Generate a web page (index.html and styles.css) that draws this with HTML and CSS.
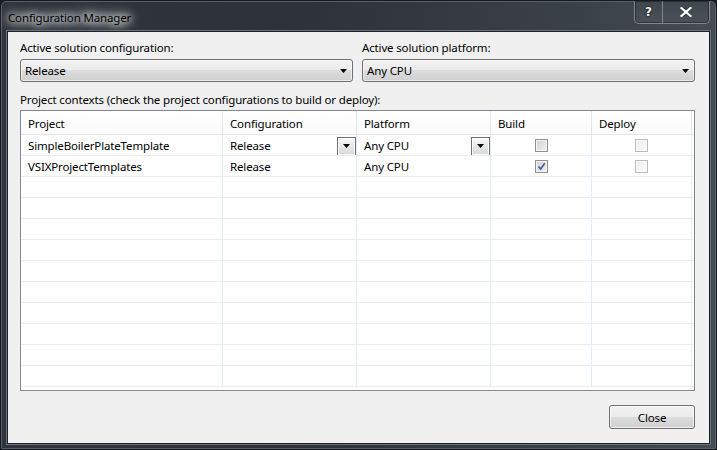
FILE: index.html
```html
<!DOCTYPE html>
<html>
<head>
<meta charset="utf-8">
<link rel="stylesheet" href="styles.css">
</head>
<body>
<div class="window">
  <div class="titlebar">
    <div class="title">Configuration Manager</div>
    <div class="caption-buttons">
      <div class="cap-btn help">?</div>
      <div class="cap-btn close">
        <svg width="12" height="10" viewBox="0 0 12 10"><path d="M1.5 1 L10.5 9 M10.5 1 L1.5 9" stroke="#2a2f35" stroke-width="3.6" stroke-linecap="square"/><path d="M1.5 1 L10.5 9 M10.5 1 L1.5 9" stroke="#ffffff" stroke-width="2.2" stroke-linecap="square"/></svg>
      </div>
    </div>
  </div>
  <div class="client-wrap">
    <div class="client">
      <div class="top-row">
        <div class="field">
          <div class="label">Active solution configuration:</div>
          <div class="combo"><span>Release</span><svg class="arrow" width="7" height="4" viewBox="0 0 7 4"><path d="M0 0H7L3.5 4Z" fill="#000"/></svg></div>
        </div>
        <div class="field">
          <div class="label">Active solution platform:</div>
          <div class="combo"><span>Any CPU</span><svg class="arrow" width="7" height="4" viewBox="0 0 7 4"><path d="M0 0H7L3.5 4Z" fill="#000"/></svg></div>
        </div>
      </div>
      <div class="label contexts">Project contexts (check the project configurations to build or deploy):</div>
      <div class="grid">
        <div class="row head">
          <div class="cell">Project</div>
          <div class="cell">Configuration</div>
          <div class="cell">Platform</div>
          <div class="cell">Build</div>
          <div class="cell">Deploy</div>
          <div class="cell filler"></div>
        </div>
        <div class="row">
          <div class="cell">SimpleBoilerPlateTemplate</div>
          <div class="cell combo-cell"><span>Release</span><div class="cell-btn"><svg width="7" height="4" viewBox="0 0 7 4"><path d="M0 0H7L3.5 4Z" fill="#000"/></svg></div></div>
          <div class="cell combo-cell"><span>Any CPU</span><div class="cell-btn"><svg width="7" height="4" viewBox="0 0 7 4"><path d="M0 0H7L3.5 4Z" fill="#000"/></svg></div></div>
          <div class="cell center"><div class="check"></div></div>
          <div class="cell center"><div class="check disabled"></div></div>
          <div class="cell filler"></div>
        </div>
        <div class="row">
          <div class="cell">VSIXProjectTemplates</div>
          <div class="cell">Release</div>
          <div class="cell">Any CPU</div>
          <div class="cell center"><div class="check"><svg width="11" height="11" viewBox="0 0 11 11"><path d="M2.5 5.5 L4.6 8 L8.8 2.2" fill="none" stroke="#4a5e9c" stroke-width="1.7"/></svg></div></div>
          <div class="cell center"><div class="check disabled"></div></div>
          <div class="cell filler"></div>
        </div>
        <div class="row"><div class="cell"></div><div class="cell"></div><div class="cell"></div><div class="cell"></div><div class="cell"></div><div class="cell filler"></div></div>
        <div class="row"><div class="cell"></div><div class="cell"></div><div class="cell"></div><div class="cell"></div><div class="cell"></div><div class="cell filler"></div></div>
        <div class="row"><div class="cell"></div><div class="cell"></div><div class="cell"></div><div class="cell"></div><div class="cell"></div><div class="cell filler"></div></div>
        <div class="row"><div class="cell"></div><div class="cell"></div><div class="cell"></div><div class="cell"></div><div class="cell"></div><div class="cell filler"></div></div>
        <div class="row"><div class="cell"></div><div class="cell"></div><div class="cell"></div><div class="cell"></div><div class="cell"></div><div class="cell filler"></div></div>
        <div class="row"><div class="cell"></div><div class="cell"></div><div class="cell"></div><div class="cell"></div><div class="cell"></div><div class="cell filler"></div></div>
        <div class="row"><div class="cell"></div><div class="cell"></div><div class="cell"></div><div class="cell"></div><div class="cell"></div><div class="cell filler"></div></div>
        <div class="row"><div class="cell"></div><div class="cell"></div><div class="cell"></div><div class="cell"></div><div class="cell"></div><div class="cell filler"></div></div>
        <div class="row"><div class="cell"></div><div class="cell"></div><div class="cell"></div><div class="cell"></div><div class="cell"></div><div class="cell filler"></div></div>
        <div class="row"><div class="cell"></div><div class="cell"></div><div class="cell"></div><div class="cell"></div><div class="cell"></div><div class="cell filler"></div></div>
      </div>
      <div class="footer">
        <div class="button">Close</div>
      </div>
    </div>
  </div>
</div>
</body>
</html>
```
FILE: styles.css
```css
* { box-sizing: border-box; }
html, body { margin: 0; padding: 0; }
body {
  width: 717px;
  height: 450px;
  overflow: hidden;
  background: #1c1f22;
  font-family: "Noto Sans", "Open Sans", sans-serif;
  font-size: 11.5px;
  letter-spacing: -0.15px;
  color: #000;
}
.window {
  width: 717px;
  height: 450px;
  border: 1px solid #17191c;
  border-radius: 6px 6px 2px 2px;
  background: linear-gradient(90deg, #2f353b 0%, #2c3237 40%, #3a4147 80%, #444b52 100%);
  box-shadow: inset 0 0 0 1px #596067;
  display: flex;
  flex-direction: column;
}
.titlebar {
  height: 30px;
  display: flex;
  justify-content: space-between;
  align-items: flex-start;
  padding: 0 6px 0 7px;
}
.title {
  margin-top: 9px;
  line-height: 16px;
  color: #000;
  text-shadow: 0 0 6px #fff, 0 0 10px #fff, 0 0 14px rgba(255,255,255,0.9), 0 0 18px rgba(255,255,255,0.7);
}
.caption-buttons {
  display: flex;
  height: 23px;
  border: 1px solid #7f868d;
  border-top: none;
  border-radius: 0 0 5px 5px;
  background: linear-gradient(180deg, #3f464d 0%, #4a5158 100%);
  box-shadow: inset 0 0 0 1px rgba(0,0,0,0.35);
}
.cap-btn {
  height: 22px;
  display: flex;
  align-items: center;
  justify-content: center;
}
.cap-btn.help {
  width: 28px;
  border-right: 1px solid #7f868d;
  color: #fff;
  font-family: "DejaVu Sans", sans-serif;
  font-weight: bold;
  font-size: 12px;
  letter-spacing: 0;
  text-shadow: 0 0 2px #000, 0 0 1px #000;
}
.cap-btn.close { width: 46px; }
.client-wrap {
  flex: 1;
  padding: 0 6px 5px 6px;
  display: flex;
}
.client {
  flex: 1;
  background: #f0f0f0;
  border: 1px solid #1e2327;
  box-shadow: 0 0 0 1px #6a7178;
  padding: 8px 14px 0 12px;
  display: flex;
  flex-direction: column;
}
.top-row {
  display: grid;
  grid-template-columns: 1fr 1fr;
  column-gap: 9px;
}
.label {
  height: 15px;
  line-height: 15px;
  white-space: nowrap;
}
.combo {
  margin-top: 4px;
  height: 23px;
  border: 1px solid #707070;
  border-radius: 3px;
  background: linear-gradient(180deg, #f2f2f2 0%, #ebebeb 50%, #dddddd 50%, #cfcfcf 100%);
  box-shadow: inset 0 0 0 1px rgba(255,255,255,0.6);
  display: flex;
  align-items: center;
  justify-content: space-between;
  padding: 0 5px 0 4px;
}
.contexts { margin-top: 10px; }
.grid {
  margin-top: 3px;
  height: 281px;
  border: 1px solid #828790;
  background: #fff;
  overflow: hidden;
}
.row {
  display: grid;
  grid-template-columns: 202px 134px 134px 101px 100px 1fr;
  height: 21px;
  border-bottom: 1px solid #ececec;
}
.row.head {
  height: 24px;
  border-bottom: 1px solid #e5e5e5;
  background: linear-gradient(180deg, #ffffff 0%, #fbfbfb 100%);
}
.cell {
  border-right: 1px solid #e6ecf5;
  padding-left: 7px;
  padding-top: 1px;
  display: flex;
  align-items: center;
  white-space: nowrap;
  overflow: hidden;
}
.head .cell { border-right-color: #e5e5e5; }
.cell.filler { border-right: none; padding: 0; }
.combo-cell {
  justify-content: space-between;
  padding-right: 0;
}
.cell-btn {
  width: 19px;
  height: 19px;
  margin-top: 1px;
  border: 1px solid #6e6e6e;
  background: linear-gradient(180deg, #fafafa 0%, #e6e6e6 50%, #d8d8d8 100%);
  box-shadow: inset 0 0 0 1px #ffffff;
  display: flex;
  align-items: center;
  justify-content: center;
}
.cell.center { justify-content: center; padding-left: 0; }
.check {
  width: 13px;
  height: 13px;
  border: 1px solid #8e8f8f;
  background: linear-gradient(135deg, #d0d0d0 0%, #f2f2f2 100%);
  box-shadow: inset 0 0 0 1px #f4f4f4;
  display: flex;
  align-items: center;
  justify-content: center;
}
.check svg { display: block; }
.check.disabled {
  border-color: #bcbcbc;
  background: linear-gradient(135deg, #ececec 0%, #fcfcfc 100%);
  box-shadow: inset 0 0 0 1px #fafafa;
}
.footer {
  display: flex;
  justify-content: flex-end;
  margin-top: 14px;
}
.button {
  width: 86px;
  height: 24px;
  border: 1px solid #707070;
  border-radius: 3px;
  background: linear-gradient(180deg, #f2f2f2 0%, #ebebeb 50%, #dddddd 50%, #cfcfcf 100%);
  box-shadow: inset 0 0 0 1px rgba(255,255,255,0.7);
  display: flex;
  align-items: center;
  justify-content: center;
}
```
